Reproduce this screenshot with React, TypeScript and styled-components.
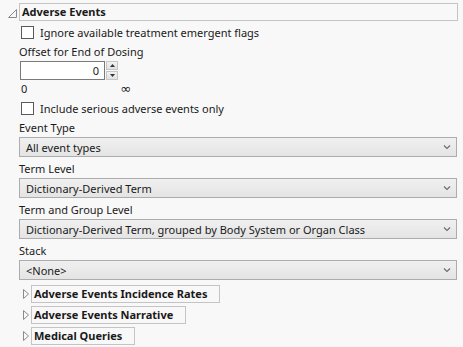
import styled, { createGlobalStyle } from 'styled-components';

const GlobalStyle = createGlobalStyle`
  html, body {
    margin: 0;
    padding: 0;
    background: #f8f8f8;
  }
  body {
    font-family: "Noto Sans", "Open Sans", sans-serif;
    font-size: 11px;
    color: #1a1a1a;
  }
`;

function ExpandedIcon() {
  return (
    <svg width="11" height="11" viewBox="0 0 11 11">
      <path d="M9.5 1.5 L9.5 9.5 L1.5 9.5 Z" fill="none" stroke="#8a8a8a" strokeWidth="1" />
    </svg>
  );
}

function CollapsedIcon() {
  return (
    <svg width="8" height="12" viewBox="0 0 8 12">
      <path d="M1.5 1.5 L6.5 6 L1.5 10.5 Z" fill="none" stroke="#8a8a8a" strokeWidth="1" />
    </svg>
  );
}

function Chevron() {
  return (
    <svg width="8" height="6" viewBox="0 0 8 6">
      <path d="M1 1.5 L4 4.5 L7 1.5" fill="none" stroke="#6a6a6a" strokeWidth="1.1" />
    </svg>
  );
}

function Select({ value }: { value: string }) {
  return (
    <SelectBox>
      <span>{value}</span>
      <Chevron />
    </SelectBox>
  );
}

export default function App() {
  return (
    <Page>
      <GlobalStyle />
      <HeaderRow>
        <ToggleSlot>
          <ExpandedIcon />
        </ToggleSlot>
        <HeaderBox>Adverse Events</HeaderBox>
      </HeaderRow>
      <Content>
        <CheckRow>
          <CheckBox />
          <span>Ignore available treatment emergent flags</span>
        </CheckRow>
        <Label>Offset for End of Dosing</Label>
        <SpinRow>
          <NumberBox>0</NumberBox>
          <Spinner>
            <SpinButton>
              <svg width="5" height="3" viewBox="0 0 5 3"><path d="M0 3 L2.5 0 L5 3 Z" fill="#333" /></svg>
            </SpinButton>
            <SpinButton>
              <svg width="5" height="3" viewBox="0 0 5 3"><path d="M0 0 L2.5 3 L5 0 Z" fill="#333" /></svg>
            </SpinButton>
          </Spinner>
        </SpinRow>
        <RangeRow>
          <span>0</span>
          <Infinity>∞</Infinity>
        </RangeRow>
        <CheckRow>
          <CheckBox />
          <span>Include serious adverse events only</span>
        </CheckRow>
        <Label>Event Type</Label>
        <Select value="All event types" />
        <Label>Term Level</Label>
        <Select value="Dictionary-Derived Term" />
        <Label>Term and Group Level</Label>
        <Select value="Dictionary-Derived Term, grouped by Body System or Organ Class" />
        <Label>Stack</Label>
        <Select value="<None>" />
      </Content>
      <SubList>
        <SubRow>
          <CollapsedIcon />
          <SubBox>Adverse Events Incidence Rates</SubBox>
        </SubRow>
        <SubRow>
          <CollapsedIcon />
          <SubBox>Adverse Events Narrative</SubBox>
        </SubRow>
        <SubRow>
          <CollapsedIcon />
          <SubBox>Medical Queries</SubBox>
        </SubRow>
      </SubList>
    </Page>
  );
}

const Page = styled.div`
  width: 463px;
  height: 347px;
  padding: 3px 5px 0 5px;
  box-sizing: border-box;
  overflow: hidden;
`;

const HeaderRow = styled.div`
  display: flex;
  align-items: center;
`;

const ToggleSlot = styled.div`
  width: 14px;
  display: flex;
  justify-content: center;
  padding-top: 3px;
`;

const HeaderBox = styled.div`
  flex: 1;
  height: 16px;
  line-height: 16px;
  border: 1px solid #c4c4c4;
  padding-left: 2px;
  font-weight: bold;
`;

const Content = styled.div`
  display: flex;
  flex-direction: column;
  padding-left: 14px;
  padding-right: 1px;
`;

const CheckRow = styled.label`
  display: flex;
  align-items: center;
  gap: 6px;
  height: 20px;
  margin-left: 2px;
  margin-top: 1px;
`;

const CheckBox = styled.span`
  width: 11px;
  height: 11px;
  border: 1px solid #5a5a5a;
  background: #fff;
`;

const Label = styled.div`
  height: 19px;
  line-height: 19px;
`;

const SpinRow = styled.div`
  display: flex;
  align-items: stretch;
  height: 19px;
  margin-left: 1px;
`;

const NumberBox = styled.div`
  width: 78px;
  border: 1px solid #7a7a7a;
  background: #fff;
  text-align: right;
  padding-right: 5px;
  line-height: 17px;
`;

const Spinner = styled.div`
  display: flex;
  flex-direction: column;
  margin-left: 1px;
  width: 12px;
  gap: 1px;
`;

const SpinButton = styled.div`
  flex: 1;
  display: flex;
  align-items: center;
  justify-content: center;
  background: linear-gradient(#f2f2f2, #e2e2e2);
  border: 1px solid #c6c6c6;
`;

const RangeRow = styled.div`
  display: flex;
  justify-content: space-between;
  align-items: center;
  width: 110px;
  height: 17px;
  line-height: 17px;
  margin-left: 2px;
`;

const Infinity = styled.span`
  font-family: "DejaVu Sans", sans-serif;
  font-size: 13px;
`;

const SelectBox = styled.div`
  display: flex;
  align-items: center;
  justify-content: space-between;
  height: 18px;
  border: 1px solid #acacac;
  background: linear-gradient(#f0f0f0, #e4e4e4);
  padding: 0 5px 0 6px;
  margin-bottom: 2px;
`;

const SubList = styled.div`
  display: flex;
  flex-direction: column;
  gap: 3px;
  margin-top: 3px;
  padding-left: 17px;
`;

const SubRow = styled.div`
  display: flex;
  align-items: center;
  gap: 1px;
`;

const SubBox = styled.div`
  height: 16px;
  line-height: 16px;
  border: 1px solid #c4c4c4;
  padding: 0 12px 0 2px;
  font-weight: bold;
`;
